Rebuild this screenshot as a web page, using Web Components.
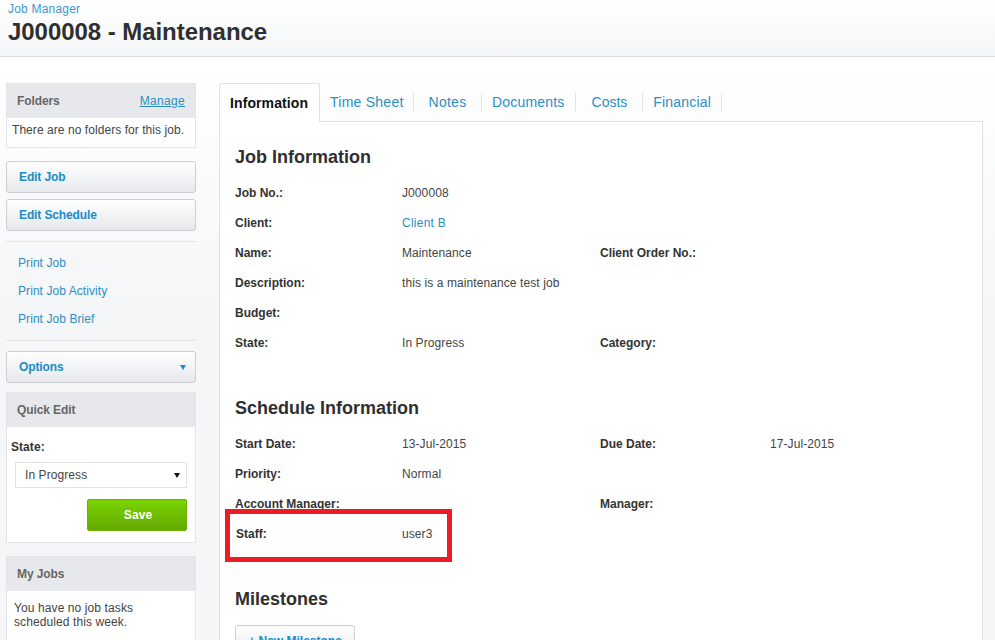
<!DOCTYPE html>
<html><head><meta charset="utf-8">
<style>
html,body{margin:0;padding:0;height:640px;overflow:hidden;background:#f5f6f8;font:12px/14px "Liberation Sans",Arial,sans-serif;color:#333}
</style></head><body>
<jm-page>
  <jm-header slot="header" crumb="Job Manager" title="J000008 - Maintenance"></jm-header>
  <jm-sidebar slot="side">
    <jm-panel heading="Folders" action="Manage" pad="folders">There are no folders for this job.</jm-panel>
    <jm-btn style="margin-top:13px">Edit Job</jm-btn>
    <jm-btn style="margin-top:6px">Edit Schedule</jm-btn>
    <jm-links style="margin-top:10px"><a>Print Job</a><a>Print Job Activity</a><a>Print Job Brief</a></jm-links>
    <jm-btn style="margin-top:10px" caret>Options</jm-btn>
    <jm-panel heading="Quick Edit" pad="none" style="margin-top:9px"><jm-quick></jm-quick></jm-panel>
    <jm-panel heading="My Jobs" pad="jobs" style="margin-top:13px">You have no job tasks scheduled this week.</jm-panel>
  </jm-sidebar>
  <jm-main slot="main">
    <jm-tabs></jm-tabs>
    <jm-content>
      <jm-section heading="Job Information" style="--top:25px">
        <jm-row l1="Job No.:" v1="J000008"></jm-row>
        <jm-row l1="Client:" v1="Client B" link></jm-row>
        <jm-row l1="Name:" v1="Maintenance" l2="Client Order No.:"></jm-row>
        <jm-row l1="Description:" v1="this is a maintenance test job"></jm-row>
        <jm-row l1="Budget:"></jm-row>
        <jm-row l1="State:" v1="In Progress" l2="Category:"></jm-row>
      </jm-section>
      <jm-section heading="Schedule Information" style="--top:40px">
        <jm-row l1="Start Date:" v1="13-Jul-2015" l2="Due Date:" v2="17-Jul-2015"></jm-row>
        <jm-row l1="Priority:" v1="Normal"></jm-row>
        <jm-row l1="Account Manager:" l2="Manager:"></jm-row>
        <jm-row l1="Staff:" v1="user3" nudge></jm-row>
      </jm-section>
      <jm-section heading="Milestones" style="--top:40px;--gap:15px">
        <jm-newbtn>+ New Milestone</jm-newbtn>
      </jm-section>
      <jm-mark></jm-mark>
    </jm-content>
  </jm-main>
</jm-page>
<script>
const def=(name,css,html,init)=>customElements.define(name,class extends HTMLElement{
  connectedCallback(){ if(this.shadowRoot) return;
    const a=k=>{const v=this.getAttribute(k);return v===null?'':v};
    const r=this.attachShadow({mode:'open'});
    r.innerHTML='<style>'+css+'</style>'+(typeof html==='function'?html(a,this):html);
    if(init) init(r,this);
  }
});
def('jm-page',`
 :host{display:block;width:995px;height:640px;overflow:hidden;position:relative;background:linear-gradient(#ffffff 57px,#f5f6f8 300px)}
 .cols{display:flex;padding:26px 0 0 6px;gap:23px}
`,`<slot name="header"></slot><div class="cols"><slot name="side"></slot><slot name="main"></slot></div>`);
def('jm-header',`
 :host{display:block;height:56px;box-sizing:content-box;border-bottom:1px solid #d6d8da;background:linear-gradient(#ffffff,#f5f6f8);padding:0 0 0 8px;overflow:hidden}
 .c{color:#3f97c9;font-size:12px;line-height:14px;padding-top:2px;letter-spacing:.2px}
 h1{margin:0;font:bold 24px/28px "Liberation Sans",Arial,sans-serif;color:#2f2f2f;padding-top:2px;letter-spacing:-.05px}
`,a=>`<div class="c">${a('crumb')}</div><h1>${a('title')}</h1>`);
def('jm-sidebar',`:host{display:block;width:190px;flex:none}`,`<slot></slot>`);
def('jm-panel',`
 :host{display:block;border:1px solid #e2e4e6;background:#fff;box-sizing:border-box}
 .h{height:34px;background:#e6e8eb;display:flex;justify-content:space-between;align-items:center;padding:0 10px;font-weight:bold;color:#666;letter-spacing:-.1px}
 .a{font-weight:normal;color:#2b8fc5;text-decoration:underline;letter-spacing:.33px}
 .b{color:#444;letter-spacing:.06px}
 .folders{padding:5px 5px 11px;height:13px;white-space:nowrap}
 .jobs{padding:10px 7px 30px 7px;letter-spacing:.1px}
`,a=>`<div class="h"><span>${a('heading')}</span>${a('action')?`<span class="a">${a('action')}</span>`:''}</div><div class="b ${a('pad')}"><slot></slot></div>`);
def('jm-btn',`
 :host{display:flex;height:32px;box-sizing:border-box;border:1px solid #ccced0;border-radius:3px;background:linear-gradient(#ffffff,#e6e8eb);align-items:center;justify-content:space-between;padding:0 9px 0 12px;font-weight:bold;color:#1b8bc6;letter-spacing:-.12px}
 svg{display:block}
`,(a,e)=>`<span><slot></slot></span>${e.hasAttribute('caret')?'<svg width="6" height="5" viewBox="0 0 6 5"><path d="M0 0H6L3 5Z" fill="#1b8bc6"/></svg>':''}`);
def('jm-links',`
 :host{display:block;border-top:1px solid #e2e4e6;border-bottom:1px solid #e2e4e6;padding:7px 0 7px 12px}
 ::slotted(a){display:block;line-height:28px;color:#2b8fc5;letter-spacing:.07px}
`,`<slot></slot>`);
def('jm-quick',`
 :host{display:block;height:115px;padding:0 8px 0 4px;color:#333}
 .l{font-weight:bold;padding-top:13px;line-height:14px}
 .s{margin:8px 0 0 4px;height:26px;box-sizing:border-box;border:1px solid #e0e2e4;display:flex;align-items:center;justify-content:space-between;padding:0 6px 0 9px;color:#444;background:#fff;letter-spacing:.08px}
 .s svg{display:block}
 .row{display:flex;justify-content:flex-end;margin-top:11px}
 .save{width:100px;height:32px;box-sizing:border-box;border:1px solid #6fb000;border-radius:2px;background:linear-gradient(#7ad400,#63a800);color:#fff;font-weight:bold;display:flex;align-items:center;justify-content:center;padding-left:2px}
`,`<div class="l">State:</div><div class="s"><span>In Progress</span><svg width="6" height="5" viewBox="0 0 6 5"><path d="M0 0H6L3 5Z" fill="#111"/></svg></div><div class="row"><div class="save">Save</div></div>`);
def('jm-main',`:host{display:block;width:764px;flex:none}`,`<slot></slot>`);
def('jm-tabs',`
 :host{display:flex;height:39px;box-sizing:border-box;position:relative}
 .t{color:#2b8fc5;font-size:14px;line-height:16px;height:18px;padding:0 10px;margin-top:10px;border-right:1px solid #e0e2e4;display:flex;align-items:center;white-space:nowrap;position:relative;letter-spacing:.2px}
 .on{box-sizing:border-box;width:101px;height:39px;margin:0;padding:0 0 0 10px;background:#fff;color:#111;font-weight:bold;border:1px solid #e0e2e4;border-bottom:0;border-radius:3px 3px 0 0;z-index:1;letter-spacing:.1px}
 .rule{flex:1;border-bottom:1px solid #e0e2e4;height:38px}
 .w{display:flex;align-items:flex-start;flex:none;border-bottom:1px solid #e0e2e4;height:38px}
`,`<div class="t on">Information</div><div class="w"><div class="t" style="padding-right:9px;letter-spacing:.25px">Time Sheet</div><div class="t" style="padding:0 14.5px 0 15px;letter-spacing:.25px">Notes</div><div class="t">Documents</div><div class="t" style="padding:0 15px 0 16px;letter-spacing:0">Costs</div><div class="t">Financial</div></div><div class="rule"></div>`);
def('jm-content',`
 :host{display:block;position:relative;background:#fff;border-left:1px solid #e0e2e4;border-right:1px solid #e0e2e4;height:600px;padding-left:15px;box-sizing:border-box}
`,`<slot></slot>`);
def('jm-section',`
 :host{display:block}
 h2{margin:0;padding-top:var(--top);font:bold 18px/21px "Liberation Sans",Arial,sans-serif;color:#2f2f2f}
 .b{margin-top:var(--gap,10px)}
`,a=>`<h2>${a('heading')}</h2><div class="b"><slot></slot></div>`);
def('jm-row',`
 :host{display:grid;grid-template-columns:167px 198px 170px 1fr;height:30px;align-items:center;color:#444}
 b{color:#333}
 span{letter-spacing:.09px}
 .lk{color:#2b8fc5;letter-spacing:.25px}
`,(a,e)=>`<b ${e.hasAttribute('nudge')?'style="margin-left:1px"':''}>${a('l1')}</b><span class="${e.hasAttribute('link')?'lk':''}">${a('v1')}</span><b>${a('l2')}</b><span>${a('v2')}</span>`);
def('jm-newbtn',`
 :host{display:inline-flex;width:120px;height:32px;box-sizing:border-box;border:1px solid #ccced0;border-radius:3px;background:linear-gradient(#ffffff,#e6e8eb);align-items:center;justify-content:center;font-weight:bold;color:#1b8bc6}
`,`<slot></slot>`);
def('jm-mark',`
 :host{position:absolute;left:5px;top:387px;width:227px;height:53px;box-sizing:border-box;border:5px solid #ed1c24;pointer-events:none}
`,``);
</script>
</body></html>
